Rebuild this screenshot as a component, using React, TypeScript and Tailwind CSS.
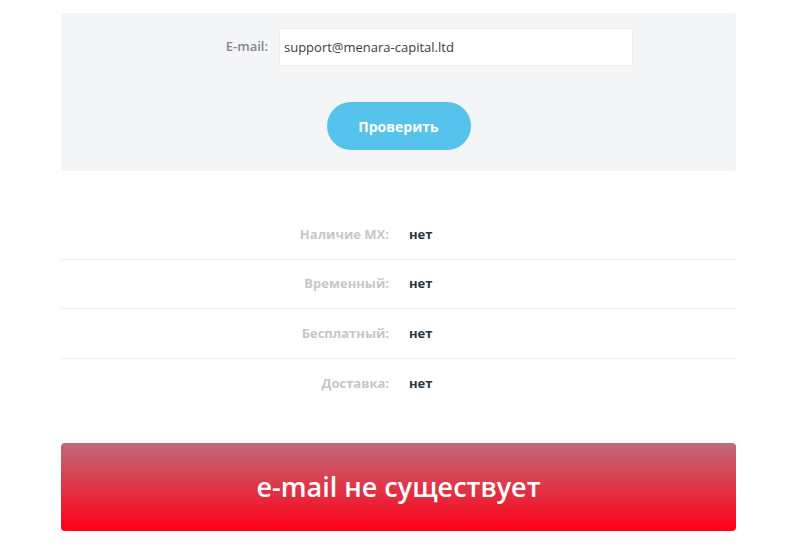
import React from 'react';

const rows = [
  { label: 'Наличие MX:', value: 'нет' },
  { label: 'Временный:', value: 'нет' },
  { label: 'Бесплатный:', value: 'нет' },
  { label: 'Доставка:', value: 'нет' },
];

export default function App() {
  return (
    <div className="min-h-[544px] bg-white pt-[13px] font-['Open_Sans',sans-serif]">
      <div className="ml-[61px] w-[675px]">
        {/* check form */}
        <div className="rounded-[4px] bg-[#f4f5f7] pb-[21px] pt-[15px]">
          <div className="flex items-center">
            <label className="w-[207px] text-right text-[13px] font-semibold text-[#85888c]">E-mail:</label>
            <input
              className="ml-[11px] h-[38px] w-[354px] rounded-[2px] border border-[#eceef0] bg-white px-[4px] text-[13px] text-[#3a3d42] outline-none"
              defaultValue="support@menara-capital.ltd"
            />
          </div>
          <div className="mt-[36px] flex justify-center">
            <button className="h-[48px] w-[144px] rounded-full bg-[#56c3ec] text-[14px] font-bold text-white">
              Проверить
            </button>
          </div>
        </div>

        {/* results */}
        <div className="mt-[39px]">
          {rows.map((r, i) => (
            <div
              key={r.label}
              className={`flex h-[49.5px] items-center ${i < rows.length - 1 ? 'border-b border-[#eceef0]' : ''}`}
            >
              <div className="w-[328px] text-right text-[13px] font-bold text-[#c4c7cb]">{r.label}</div>
              <div className="ml-[20px] text-[13px] font-bold text-[#30343b]">{r.value}</div>
            </div>
          ))}
        </div>

        {/* status */}
        <div className="mt-[35px] flex h-[88px] items-center justify-center rounded-[4px] bg-[linear-gradient(to_bottom,#bf6b79,#ff0017)]">
          <span className="text-[27px] font-semibold text-white">e-mail не существует</span>
        </div>
      </div>
    </div>
  );
}
